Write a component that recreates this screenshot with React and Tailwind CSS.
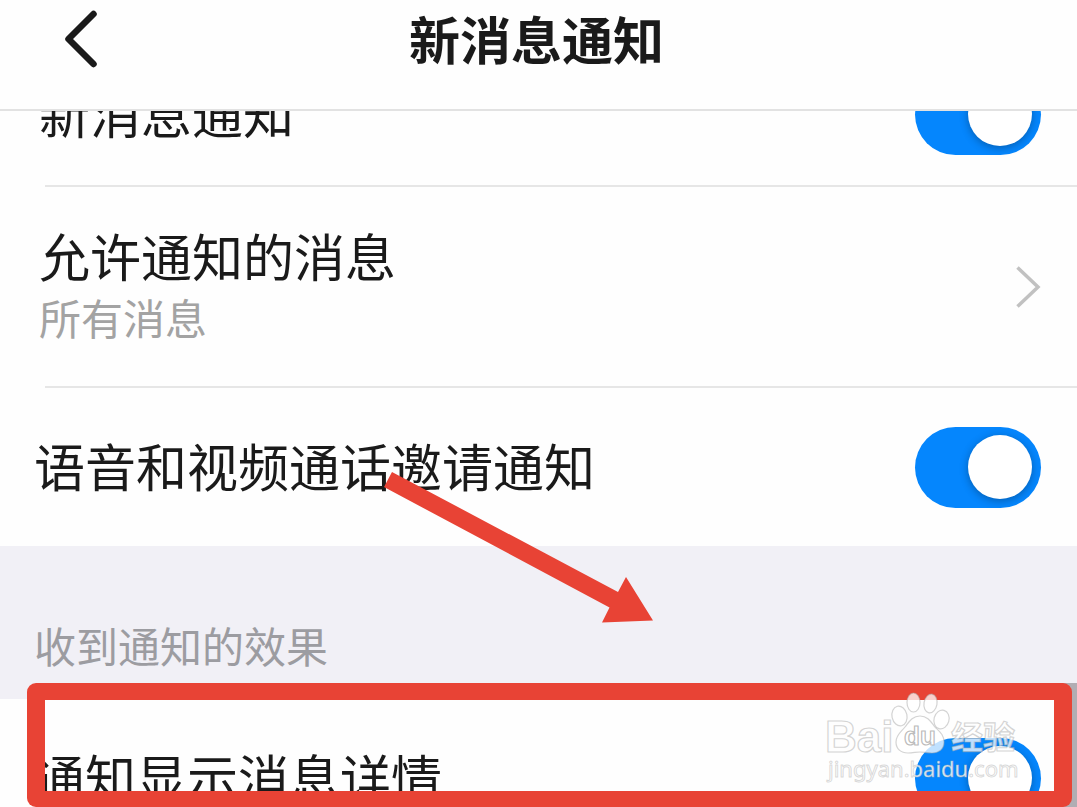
export default function App() {
  return (
    <main className="relative h-screen overflow-hidden bg-[#fefefe] font-['Noto_Sans_CJK_SC',sans-serif] text-[#1a1a1a]">
      <header className="relative z-10 border-b-2 border-[#e2e2e2] bg-[#fefefe] px-16 pb-[26px]">
        <div className="grid h-[83px] grid-cols-[36px_1fr_40px] items-center">
          <button type="button" aria-label="返回" className="pb-1.5">
            <BackIcon />
          </button>
          <h1 className="pb-2 text-center text-[51px] leading-[64px] font-bold">新消息通知</h1>
        </div>
      </header>

      {/* the list is scrolled, so its first row slides under the header */}
      <section className="-mt-[69px]">
        <SwitchRow id="new-message" label="新消息通知" className="h-36 pl-[39px]" />
        <Divider />
        <a href="#allowed" className="flex h-[200px] items-center justify-between pr-9 pl-[39px]">
          <span className="pb-1">
            <span className="block text-[51px] leading-[64px]">允许通知的消息</span>
            <span className="block text-[42px] leading-[60px] text-[#a3a3a3]">所有消息</span>
          </span>
          <ChevronIcon />
        </a>
        <Divider />
        <SwitchRow id="call-invite" label="语音和视频通话邀请通知" className="h-[158px] pl-[34px]" />
      </section>

      <h2 className="flex h-[153px] items-end bg-[#f1f0f6] pb-6 pl-[34px] text-[42px] leading-[60px] font-normal text-[#9c9ca1]">
        收到通知的效果
      </h2>

      <section className="relative">
        <SwitchRow id="show-detail" label="通知显示消息详情" className="h-[158px] pl-[34px]" />
        <div className="absolute -top-4 right-0 h-[124px] w-4 bg-[#b1adb3]" />
        <div className="absolute -top-4 right-[5px] left-[27px] h-[124px] rounded-[9px] bg-[#e84335] [clip-path:polygon(0_0,100%_0,100%_100%,0_100%,0_17px,18px_17px,18px_108px,calc(100%-18px)_108px,calc(100%-18px)_17px,0_17px)]" />
        <Watermark />
      </section>

      <Arrow />
    </main>
  );
}

function SwitchRow({ id, label, className }) {
  return (
    <div className={`flex items-center justify-between pr-9 ${className}`}>
      <label htmlFor={id} className="pb-1 text-[51px] leading-[64px] whitespace-nowrap">
        {label}
      </label>
      <input
        id={id}
        type="checkbox"
        role="switch"
        defaultChecked
        className="flex h-[81px] w-[126px] shrink-0 appearance-none items-center rounded-full bg-[#ccc] px-[9px] before:size-16 before:rounded-full before:bg-white before:shadow-[0_2px_8px_rgba(0,0,0,0.3)] before:content-[''] checked:justify-end checked:bg-[#0586fd]"
      />
    </div>
  );
}

function Divider() {
  return <hr className="-mt-px ml-[45px] border-t-2 border-[#e6e6e6]" />;
}

function BackIcon() {
  return (
    <svg width="36" height="60" viewBox="0 0 36 60" fill="none" stroke="#1a1a1a" strokeWidth="6.5" strokeLinecap="round" strokeLinejoin="round">
      <path d="M29.5 5 4.5 30l25 25" />
    </svg>
  );
}

function ChevronIcon() {
  return (
    <svg width="26" height="44" viewBox="0 0 26 44" fill="none" stroke="#c1c1c1" strokeWidth="3.5">
      <path d="M2.5 2.5 23 22 2.5 41.5" />
    </svg>
  );
}

function Arrow() {
  return (
    <svg className="absolute top-[470px] left-[380px]" width="280" height="160" viewBox="380 470 280 160" fill="#e84335">
      <path d="M392 472 618 592 626 577 653 620.5 602 622.5 609.5 607.5 384 487Z" />
    </svg>
  );
}

function Watermark() {
  return (
    <svg
      className="absolute -top-2 right-[53px]"
      width="204"
      height="100"
      viewBox="820 691 204 100"
      fill="#fff"
      fillOpacity="0.75"
      stroke="#aaa"
      strokeOpacity="0.5"
      strokeWidth="1.2"
    >
      <text x="825" y="752" fontFamily="Liberation Sans" fontWeight="700" fontSize="44">Bai</text>
      <ellipse cx="899.5" cy="716" rx="7.5" ry="10" transform="rotate(-12 899.5 716)" />
      <ellipse cx="913.5" cy="702.5" rx="6.5" ry="9.5" />
      <ellipse cx="930.5" cy="703.5" rx="6.5" ry="9.5" transform="rotate(10 930.5 703.5)" />
      <ellipse cx="941.5" cy="719.5" rx="7.5" ry="9.5" transform="rotate(15 941.5 719.5)" />
      <path d="M920 716c8 0 11 6 15 11 5 5 9 8 9 15 0 7-5 11-12 11-5 0-8-1-12-1s-7 1-12 1c-7 0-12-4-12-11s5-10 9-15c4-5 7-11 15-11Z" />
      <text x="904" y="745" fontFamily="Liberation Sans" fontWeight="700" fontSize="26" strokeOpacity="0.8">du</text>
      <text x="951" y="749" fontFamily="Noto Sans CJK SC" fontWeight="700" fontSize="32">经验</text>
      <text x="828" y="777" fontFamily="Noto Sans" fontSize="22" fillOpacity="0.85" strokeOpacity="0.45" strokeWidth="1">jingyan.baidu.com</text>
    </svg>
  );
}
